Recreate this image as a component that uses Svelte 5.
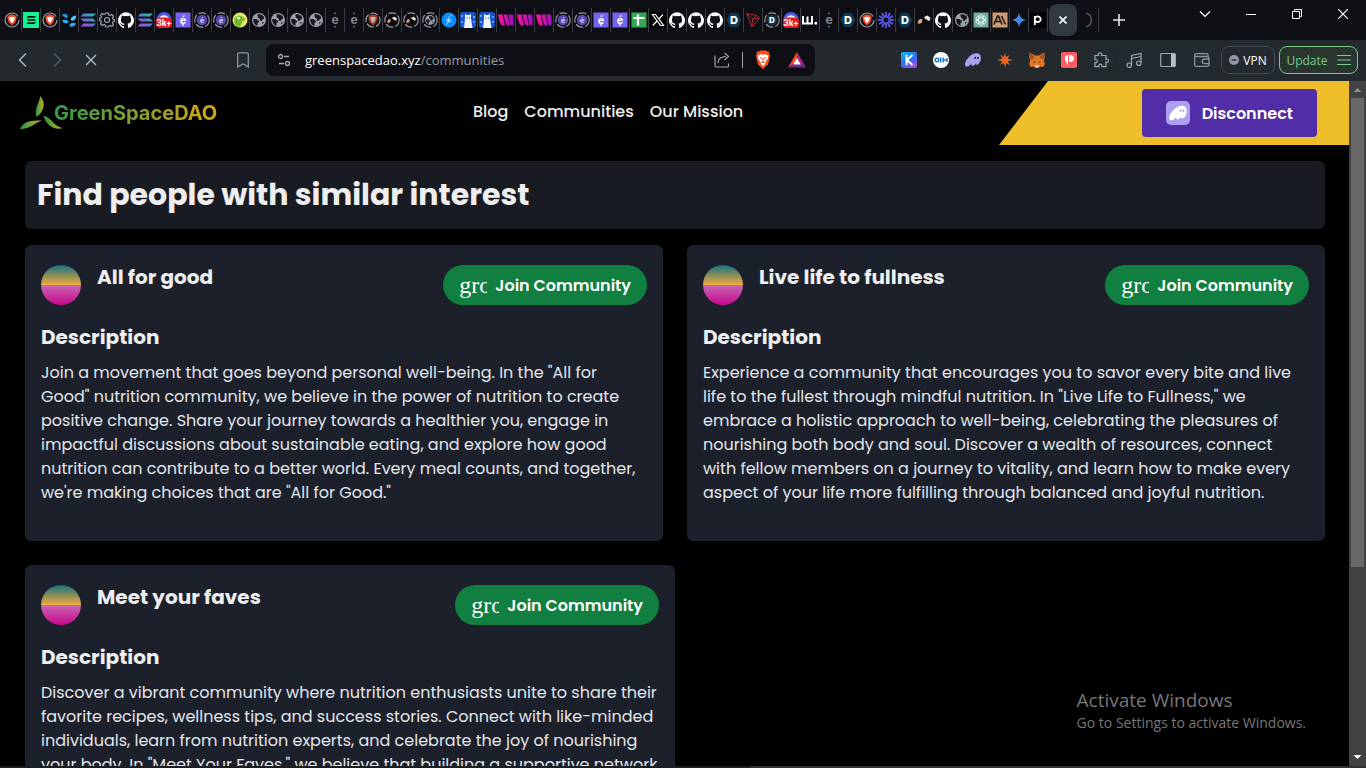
<script>
  const tabs = [
    'brave', 'green', 'brave', 'drops', 'solana', 'gear', 'github', 'solana', 'badge', 'purple',
    'ring', 'ring', 'gecko', 'globe', 'globe', 'globe', 'globe', 'dim', 'dim', 'braveDim',
    'shakeRing', 'shakeRing', 'globeRing', 'filecoin', 'llama', 'llama', 'wave', 'wave', 'wave',
    'ring', 'ring', 'purple', 'purple', 'sheets', 'x', 'github', 'github', 'github', 'd', 'tron',
    'dRing', 'badge', 'w', 'dim', 'd', 'brave', 'burst', 'd', 'shake', 'github', 'globe',
    'openai', 'ai', 'gemini', 'p'
  ];

  const links = ['Blog', 'Communities', 'Our Mission'];

  const communities = [
    {
      name: 'All for good',
      text: `Join a movement that goes beyond personal well-being. In the "All for
Good" nutrition community, we believe in the power of nutrition to create
positive change. Share your journey towards a healthier you, engage in
impactful discussions about sustainable eating, and explore how good
nutrition can contribute to a better world. Every meal counts, and together,
we're making choices that are "All for Good."`
    },
    {
      name: 'Live life to fullness',
      text: `Experience a community that encourages you to savor every bite and live
life to the fullest through mindful nutrition. In "Live Life to Fullness," we
embrace a holistic approach to well-being, celebrating the pleasures of
nourishing both body and soul. Discover a wealth of resources, connect
with fellow members on a journey to vitality, and learn how to make every
aspect of your life more fulfilling through balanced and joyful nutrition.`
    },
    {
      name: 'Meet your faves',
      wide: true,
      text: `Discover a vibrant community where nutrition enthusiasts unite to share their
favorite recipes, wellness tips, and success stories. Connect with like-minded
individuals, learn from nutrition experts, and celebrate the joy of nourishing
your body. In "Meet Your Faves," we believe that building a supportive network`
    }
  ];

  const rays = [0, 30, 60, 90, 120, 150];
</script>

{#snippet lion()}
  <path d="M5 3.500 6.200 2.500h3.600L11 3.500l1.500.2-.3 1.300.5 1-1.400 4.600L8 13.500l-3.300-2.900L3.300 6l.5-1-.3-1.300z" fill="#f0502a" />
  <path d="M5 5.500 8 4.800l3 .7L9.900 8.700 8 11.300 6.100 8.700z" fill="#fff" />
{/snippet}

{#snippet hands()}
  <path d="M1.500 10.500 3.500 7l3 .3-.7 3.400-3 1.300z" fill="#e9a27c" />
  <path d="m8 5 3.500-1.500L14.500 6l-1 3-3.500-1z" fill="#f3e6dc" />
  <path d="M7 7.500 10 7l3 3-2.500 2.500H7z" fill="#050505" />
{/snippet}

{#snippet world()}
  <circle cx="8" cy="8" r="7" fill="#9aa0a6" />
  <path d="M2.300 7h3.200l2.500 2.200v1.300H6.500v3.200C4 13.200 1.800 10.500 2.300 7zM6.500 2.500C9 1.800 11.500 2.800 13 5v1.500l-1.500 1-1 1.500-2-.5.500-1.500-2-1.500-.5-1.500zM11 10.500l2-.5-1.500 2.500z" fill="#17181d" />
{/snippet}

{#snippet favicon(kind)}
  <svg width="16" height="16" viewBox="0 0 16 16" aria-hidden="true">
    {#if kind === 'brave' || kind === 'braveDim'}
      <circle cx="8" cy="8" r="7" fill="none" stroke="#9a9ca3" stroke-width="1.200" stroke-dasharray={kind === 'brave' ? '40 4' : '8 2'} />
      <g opacity={kind === 'brave' ? 1 : 0.7}>{@render lion()}</g>
    {:else if kind === 'green'}
      <path d="M0 0h16v16H0z" fill="#14f195" />
      <path d="M5 4h8l-1.500 1.800H3.500zM4 7h7.500l1.500 1.800H5zM5 10.200h8L11.500 12h-8z" fill="#06170f" />
    {:else if kind === 'drops'}
      <path d="M1 2.500C3.500.8 7 2 7 4.500 6.500 7 3 6 1 2.500z" fill="#1f8fe0" />
      <path d="M15 3.500C15.500 7 13 9.500 10.500 8.500 8.500 6.500 11 4 15 3.500z" fill="#54c5f7" />
      <path d="M1 8.500c3-1.500 5.500-.8 6.500 1.300C6.500 12.500 3 12 1 8.500zM15 11.500c-1.500 3.500-5 4.200-6.500 2 0-2.500 3.500-3.500 6.500-2z" fill="#2aa9f0" />
    {:else if kind === 'solana'}
      <path d="M3.500 1.500H16l-3 3H.5zM.5 6.500H13l3 3H3.500zM3.500 11.500H16l-3 3H.5z" fill="url(#sol)" />
    {:else if kind === 'gear'}
      <path d="M6.700 1h2.600l.4 1.900 1.400.6 1.700-1 1.700 1.700-1 1.700.6 1.400 1.400.3v1.700l-1.400.4-.6 1.400 1 1.700-1.700 1.700-1.700-1-1.400.6L9.300 15H6.700l-.4-1.900-1.400-.6-1.700 1-1.700-1.700 1-1.700-.6-1.400L.5 8.300V6.700l1.400-.4.6-1.400-1-1.700 1.700-1.700 1.700 1 1.400-.6z" fill="none" stroke="#9aa6b0" stroke-width="1.200" />
      <circle cx="8" cy="8" r="2.500" fill="none" stroke="#9aa6b0" stroke-width="1.200" />
    {:else if kind === 'github'}
      <path d="M8 .3a8 8 0 0 0-2.500 15.600c.4.100.500-.2.500-.4v-1.500c-2.200.5-2.700-1-2.700-1-.4-.9-.9-1.200-.9-1.200-.7-.5.1-.5.1-.5.800.1 1.200.8 1.200.8.700 1.300 1.900.9 2.300.7.100-.5.300-.9.500-1.100-1.800-.2-3.600-.9-3.600-3.900 0-.9.300-1.600.8-2.200-.1-.2-.4-1 .1-2.100 0 0 .7-.2 2.200.8a7.500 7.500 0 0 1 4 0c1.500-1 2.200-.8 2.200-.8.4 1.100.2 1.900.1 2.100.500.6.8 1.300.8 2.200 0 3.100-1.900 3.700-3.700 3.900.3.300.600.8.600 1.500v2.300c0 .2.100.5.5.4A8 8 0 0 0 8 .3z" fill="#fff" />
    {:else if kind === 'badge'}
      <circle cx="8" cy="7.500" r="7.500" fill="#4659e8" />
      <path d="M3 5.500q5-5 10 0z" fill="#e9e9ff" />
      <rect y="6" width="16" height="10" rx="3" fill="#e01b24" />
      <text x="8" y="14" font-size="8.500" font-weight="700" fill="#fff" text-anchor="middle">3k+</text>
    {:else if kind === 'purple'}
      <path d="M.5.5h15v15H.5z" fill="#7464f2" />
      <text x="8" y="12" font-size="11" font-weight="700" fill="#fff" text-anchor="middle">é</text>
      <path d="M7.300 12h1.400v2H7.300z" fill="#fff" />
    {:else if kind === 'ring'}
      <circle cx="8" cy="8" r="7.200" fill="none" stroke="#9496a0" stroke-width="1.200" stroke-dasharray="8 2" />
      <circle cx="8" cy="8" r="5.200" fill="#5549ad" />
      <text x="8" y="10.500" font-size="7" font-weight="700" fill="#dcd9ff" text-anchor="middle">é</text>
    {:else if kind === 'gecko'}
      <circle cx="8" cy="8" r="7.500" fill="#e6e364" />
      <path d="M3 6c2-3 6-3 9 0 2 2 1 3-2 3 0 3-1 5-3 6-4-1-6-5-4-9z" fill="#73b72b" />
      <circle cx="6.500" cy="6" r="1.300" fill="#fff" />
    {:else if kind === 'globe'}
      {@render world()}
    {:else if kind === 'globeRing'}
      <circle cx="8" cy="8" r="7.200" fill="none" stroke="#9496a0" stroke-width="1.200" stroke-dasharray="8 2" />
      <g transform="translate(2.400 2.400) scale(.7)">{@render world()}</g>
    {:else if kind === 'dim'}
      <text x="8" y="11.500" font-size="12" font-weight="700" fill="#85878e" text-anchor="middle">e</text>
      <path d="M7 .5h2v1.500H7zM7 14h2v1.500H7z" fill="#60626a" />
    {:else if kind === 'shakeRing'}
      <circle cx="8" cy="8" r="7.200" fill="none" stroke="#9496a0" stroke-width="1.200" stroke-dasharray="8 2" />
      <g transform="translate(2 2) scale(.75)">{@render hands()}</g>
    {:else if kind === 'shake'}
      {@render hands()}
    {:else if kind === 'filecoin'}
      <circle cx="8" cy="8" r="7.500" fill="#0a8dfc" />
      <path d="M11 4c-2-1-2.800 0-3.200 3S7 12.500 5 12M5.500 7l5 .8M5.200 8.800l5 .8" fill="none" stroke="#d8eeff" stroke-width=".8" />
    {:else if kind === 'llama'}
      <rect width="16" height="16" rx="3" fill="#1754c9" />
      <path d="M1 3h2v2H1zM13 4h2v2h-2zM1 9h2v2H1zM13 9h2v2h-2zM3 13h1v1H3z" fill="#58a3f0" />
      <path d="M5 1.500 6.500 3h3L11 1.500v5l1.500 9.500H4l1-9z" fill="#eef5ff" />
      <path d="M6.500 5.500h1v1h-1zM9 5.500h1v1H9z" fill="#123a86" />
    {:else if kind === 'wave'}
      <path d="M0 2.500h4.500L7 13.500H4.500C2 13 1 7 0 2.500zM5.500 2.500h4L12 13.500H9.500C7.500 13 6.500 7 5.500 2.500zM10.500 2.500H15q1 4 .5 11h-2C12 13 11.500 7 10.500 2.500z" fill="url(#pink)" />
    {:else if kind === 'sheets'}
      <path d="M.5.5h15v15H.5z" fill="#34a853" />
      <path d="M2.500 6h11M7 2.500v11" stroke="#fff" stroke-width="2.200" />
    {:else if kind === 'x'}
      <path d="M0 0h16v16H0z" fill="#000" />
      <path d="M2.500 2.500h3l8 11h-3zM13 2.500l-4.500 5M7 9l-4.300 4.500" fill="none" stroke="#fff" stroke-width="1.200" />
    {:else if kind === 'd'}
      <path d="M4.500.8h7L15.500 8l-4 7.200h-7L.5 8z" fill="#0d3a52" />
      <text x="8" y="12" font-size="11" font-weight="800" fill="#fff" text-anchor="middle">D</text>
    {:else if kind === 'dRing'}
      <circle cx="8" cy="8" r="7.200" fill="none" stroke="#9496a0" stroke-width="1.200" stroke-dasharray="8 2" />
      <circle cx="8" cy="8" r="5.200" fill="#0d3a52" />
      <text x="8" y="11" font-size="8" font-weight="800" fill="#fff" text-anchor="middle">D</text>
    {:else if kind === 'tron'}
      <path d="M1.500 1.500 12 3.500l2.500 2.500L7 15zM12 3.500 7.500 7 1.500 1.500M7.500 7 7 15M7.500 7l7-1" fill="none" stroke="#b02a2e" />
    {:else if kind === 'w'}
      <path d="M1 4v7.500h9V4M5.500 4.500v7" fill="none" stroke="#fff" stroke-width="2" />
      <path d="M12.500 10h2.500v2.500h-2.500z" fill="#fff" />
    {:else if kind === 'burst'}
      {#each rays as angle}
        <path d="M8 0v16" stroke="#5b5bf5" stroke-width="1.800" transform={`rotate(${angle} 8 8)`} />
      {/each}
      <circle cx="8" cy="8" r="2.500" fill="#111119" />
    {:else if kind === 'openai'}
      <path d="M.5.5h15v15H.5z" fill="#74aa9c" />
      {#each [0, 60, 120] as angle}
        <rect x="5.800" y="2.600" width="4.400" height="10.800" rx="2.200" fill="none" stroke="#e8fff9" stroke-width=".8" transform={`rotate(${angle} 8 8)`} />
      {/each}
    {:else if kind === 'ai'}
      <path d="M.5.5h15v15H.5z" fill="#d19b75" />
      <path d="M2 12.500 5.500 4h1L10 12.500M3.500 9.500h5M9.500 4l4 8.500" fill="none" stroke="#181818" stroke-width="1.600" />
    {:else if kind === 'gemini'}
      <path d="M8 1q1 6 7 7-6 1-7 7-1-6-7-7 6-1 7-7z" fill="url(#gem)" />
    {:else if kind === 'p'}
      <path d="M0 0h16v16H0z" fill="#000" />
      <path d="M4.800 13V4M4.800 6.500a3 2.800 0 1 1 0 1.500" fill="none" stroke="#fff" stroke-width="1.800" />
    {/if}
  </svg>
{/snippet}

{#snippet ghost(color)}
  <path fill={color} d="M55.600 82.100C50.900 89.500 42.900 98.700 32.300 98.700 27.200 98.700 22.400 96.600 22.400 87.600 22.400 64.800 53.600 29.300 82.600 29.300 99.100 29.300 105.700 40.800 105.700 53.800 105.700 70.400 94.900 89.500 84.100 89.500 80.700 89.500 79 87.600 79 84.700 79 83.900 79.200 83 79.400 82.100 75.700 88.400 68.700 94.200 62 94.200 57.200 94.200 54.700 91.200 54.700 86.900 54.700 85.400 55.100 83.800 55.600 82.100zM80.600 53.300C80.600 49.500 78.400 47.600 75.900 47.600 73.300 47.600 71.100 49.500 71.100 53.300 71.100 57.100 73.300 59 75.900 59 78.400 59 80.600 57.100 80.600 53.300zM94.800 53.300C94.800 49.500 92.600 47.600 90.100 47.600 87.500 47.600 85.300 49.500 85.300 53.300 85.300 57.100 87.500 59 90.100 59 92.600 59 94.800 57.100 94.800 53.300z" fill-rule="evenodd" />
{/snippet}

<div class="browser">
  <div class="tabstrip">
    {#each tabs as kind}
      <div class="tab">{@render favicon(kind)}</div>
    {/each}
    <button class="active-tab" aria-label="Close tab">
      <svg width="8" height="8" viewBox="0 0 8 8"><path d="m.5.5 7 7m0-7-7 7" stroke="#fff" stroke-width="1.600" /></svg>
    </button>
    <div class="loading-tab">
      <svg width="16" height="16" viewBox="0 0 16 16"><path d="M6 1.200A7 7 0 0 1 6 14.800" fill="none" stroke="#50555c" stroke-width="1.600" /></svg>
    </div>
    <button class="new-tab" aria-label="New tab">
      <svg width="12" height="12" viewBox="0 0 12 12"><path d="M6 0v12M0 6h12" stroke="#e8e8e8" stroke-width="1.600" /></svg>
    </button>
    <div class="window-controls">
      <button aria-label="Search tabs"><svg width="12" height="12" viewBox="0 0 12 12"><path d="m1 3.500 5 5 5-5" fill="none" stroke="#fff" stroke-width="1.200" /></svg></button>
      <button aria-label="Minimize"><svg width="10" height="10" viewBox="0 0 10 10"><path d="M0 5.500h10" stroke="#fff" /></svg></button>
      <button aria-label="Restore"><svg width="10" height="10" viewBox="0 0 10 10"><path d="M.5 2.500h7v7h-7zM2.500 2.500v-2h7v7h-2" fill="none" stroke="#fff" /></svg></button>
      <button aria-label="Close"><svg width="10" height="10" viewBox="0 0 10 10"><path d="m0 0 10 10M10 0 0 10" stroke="#fff" stroke-width="1.200" /></svg></button>
    </div>
  </div>

  <div class="toolbar">
    <div class="history">
      <button aria-label="Back"><svg width="16" height="16" viewBox="0 0 16 16"><path d="M11 1.500 4.500 8l6.500 6.500" fill="none" stroke="#b5c0c7" stroke-width="1.300" /></svg></button>
      <button aria-label="Forward"><svg width="16" height="16" viewBox="0 0 16 16"><path d="M5 1.500 11.500 8 5 14.500" fill="none" stroke="#5c656b" stroke-width="1.300" /></svg></button>
      <button aria-label="Stop"><svg width="16" height="16" viewBox="0 0 16 16"><path d="m3 3 10 10M13 3 3 13" stroke="#b5c0c7" stroke-width="1.300" /></svg></button>
      <button class="bookmark" aria-label="Bookmark"><svg width="16" height="16" viewBox="0 0 16 16"><path d="M2.700 2q0-1.200 1.200-1.200h8.200q1.200 0 1.200 1.200v13L8 11.800 2.700 15z" fill="none" stroke="#8c989f" stroke-width="1.300" /></svg></button>
    </div>

    <div class="address">
      <svg width="14" height="14" viewBox="0 0 14 14" fill="none" stroke="#a4a7ad" stroke-width="1.300"><circle cx="3.500" cy="3.500" r="2" /><circle cx="10.500" cy="10.500" r="2" /><path d="M7 3.500h5M2 10.500h5" /></svg>
      <span class="url">greenspacedao.xyz<span>/communities</span></span>
      <button aria-label="Share"><svg width="16" height="16" viewBox="0 0 16 16" fill="none" stroke="#a2a5ab" stroke-width="1.200"><path d="M1 3.500v10q0 1.500 1.500 1.500h11q1 0 1-1v-2.500M4 11c0-4 3-6.500 8-6.500M10.500 1l4 3.500-4 3.500" /></svg></button>
      <span class="divider"></span>
      <button class="shield" aria-label="Shields"><svg width="18" height="20" viewBox="0 0 18 20"><path d="m4.500 1.500 2-.9h5l2 .9 2 .2-.3 2 1 1.800-2.200 9L9 19l-5-4.500-2.200-9 1-1.800-.3-2z" fill="#f5521e" /><path d="M4 5.500 7 4.300l2 .5 2-.5 3 1.200-.3 3.500-2 2.500-.7 2.500L9 16l-2-2-.7-2.500-2-2.500z" fill="#fff" /><path d="M5.800 7.500 8 8.500M12.200 7.500 10 8.500M9 8v3M7.500 12.500 9 11.500l1.500 1" stroke="#f5521e" /></svg></button>
      <button aria-label="Rewards"><svg width="18" height="16" viewBox="0 0 18 16"><path d="M9 0 0 15.500 9 10z" fill="#f04a24" /><path d="m9 0 9 15.500L9 10z" fill="#a52687" /><path d="M0 15.500h18L9 10z" fill="#65328f" /><path d="m9 6 3.800 6.500H5.200z" fill="#fff" /></svg></button>
    </div>

    <div class="extensions">
      <svg width="16" height="16" viewBox="0 0 16 16"><rect width="16" height="16" rx="2" fill="url(#keplr)" /><path d="M5.500 3v10M11.500 3 6 8l5.500 5" fill="none" stroke="#fff" stroke-width="2" /></svg>
      <svg width="16" height="16" viewBox="0 0 16 16"><circle cx="8" cy="8" r="8" fill="#fff" /><circle cx="4" cy="8" r="1.800" fill="none" stroke="#1877d2" stroke-width="1.400" /><path d="M7.700 5.500v5M10.200 5.500v5M10.500 8h3M14 6v4" stroke="#1877d2" stroke-width="1.400" /></svg>
      <svg width="16" height="16" viewBox="0 0 16 16"><g transform="translate(-4.200 -4.200) scale(.190)">{@render ghost('#ab9ff2')}</g></svg>
      <svg width="16" height="16" viewBox="0 0 16 16">
        <path d="m8 0 .8 5.200L12.500 3l-2 3.800L16 8l-5.500 1L13 13.500l-3.800-2.700L8 16l-1-5.200L3 13l2.500-3.800L0 8l5.500-1.200L3 2.500l4 2.700z" fill="#e8742a" /><circle cx="8" cy="8" r="2.500" fill="#ff5a1f" />
      </svg>
      <svg width="16" height="16" viewBox="0 0 16 16"><path d="m.8.500 5.200 3h4l5.200-3 .6 5-1 3 1 3.500-1.500 3-3.300-.5L9.500 16h-3L5 14.500 1.700 15 .2 12l1-3.500-1-3z" fill="#e27625" /><path d="m.8.500 4.500 4L3.500 8 .5 6zM15.200.500l-4.500 4L12.500 8l3-2z" fill="#a65125" /><path d="m4 9 2.500 1-.5 1zM12 9l-2.500 1 .5 1z" fill="#233447" /><path d="M5.500 13h5l-1 2.500h-3z" fill="#d7c1b3" /></svg>
      <svg width="16" height="16" viewBox="0 0 16 16"><rect width="16" height="16" rx="2" fill="#ff5b62" /><path d="M4 4.500Q5 3 7 3v10.500q-1-.5-1.300-2.500L4 8zM8 3c3-.5 5 1 5 3.500S11 10.500 8 10z" fill="#fff" /></svg>
      <svg width="16" height="16" viewBox="0 0 16 16"><path d="M2 3.500h3.500C4.700 1.600 6 .800 7 .800s2.400.8 1.500 2.700H13v4c1.700-.8 2.500.5 2.500 1.300S14.700 11 13 10.200v4.500H9c.5-1.800-.500-2.500-1.500-2.500S5.500 13 6 14.700H2v-4c1.700.5 2.300-.5 2.300-1.500S3.500 7.200 2 7.700z" fill="none" stroke="#9aa8b0" stroke-width="1.200" /></svg>
    </div>
    <div class="tools">
      <button aria-label="Playlist"><svg width="16" height="16" viewBox="0 0 16 16" fill="none" stroke="#9aa8b0" stroke-width="1.200"><path d="M5.500 13V3.500l9.500-2V11M5.500 6.500l9.500-2" /><circle cx="3.200" cy="13.200" r="2.200" /><circle cx="12.800" cy="11.200" r="2.200" /></svg></button>
      <button aria-label="Sidebar"><svg width="16" height="16" viewBox="0 0 16 16"><rect x=".7" y="1.500" width="14.600" height="13" rx="1" fill="none" stroke="#9aa8b0" stroke-width="1.200" /><path d="M11 1.500h4.300v13H11z" fill="#b1c0c8" /></svg></button>
      <button aria-label="Wallet"><svg width="16" height="16" viewBox="0 0 16 16" fill="none" stroke="#87949b" stroke-width="1.300"><path d="M14 4.500V2.700q0-1-1-1H2.500Q.7 1.700.7 3.200v9.600q0 1.500 1.500 1.500H13q2 0 2-2V6.500q0-2-2-2H2.500Q.7 4.500.7 3M15 7h-4.500a2.300 2.300 0 0 0 0 4.700H15" /></svg></button>
    </div>
    <button class="vpn"><svg width="10" height="10" viewBox="0 0 10 10"><circle cx="5" cy="5" r="5" fill="#9498ae" /><path d="M2.500 5h5" stroke="#23292d" stroke-width="1.400" /></svg>VPN</button>
    <button class="update">Update<svg width="14" height="12" viewBox="0 0 14 12"><path d="M0 1.500h14M0 6h14M0 10.500h14" stroke="#78c98b" stroke-width="1.200" /></svg></button>
  </div>

  <div class="viewport">
    <div class="page">
      <header>
        <a class="logo" href="#home">
          <svg width="44" height="36" viewBox="0 0 44 36">
            <defs>
              <linearGradient id="leaf"><stop stop-color="#269448" /><stop offset="1" stop-color="#c9ae20" /></linearGradient>
              <linearGradient id="sol" x1="1" y1="0" x2="0" y2="1"><stop stop-color="#19c9a0" /><stop offset=".5" stop-color="#5e77cf" /><stop offset="1" stop-color="#b344e6" /></linearGradient>
              <linearGradient id="pink"><stop stop-color="#ff1691" /><stop offset="1" stop-color="#9c0fc4" /></linearGradient>
              <linearGradient id="gem"><stop stop-color="#9a72c9" /><stop offset=".5" stop-color="#4285e8" /><stop offset="1" stop-color="#35a8dc" /></linearGradient>
              <linearGradient id="keplr" x1="0" y1="0" x2=".6" y2="1"><stop stop-color="#12bdf3" /><stop offset=".6" stop-color="#2b6ef0" /><stop offset="1" stop-color="#a14fe0" /></linearGradient>
            </defs>
            <path d="M20 1C20 8 14 12 16.500 22 23 18 27 8 20 1z" fill="url(#leaf)" />
            <path d="M0 34.500C3 25 14 25.500 22.500 25.500 16 27 12 33 0 34.500z" fill="url(#leaf)" />
            <path d="M23.500 20.500C31 22 34 32 43 33 34 36 25 29 23.500 20.500z" fill="url(#leaf)" />
          </svg>
          <span>GreenSpaceDAO</span>
        </a>
        <nav>
          {#each links as link}
            <a href={`#${link}`}>{link}</a>
          {/each}
        </nav>
        <div class="wallet">
          <button class="disconnect">
            <svg width="24" height="24" viewBox="0 0 24 24"><rect width="24" height="24" rx="5" fill="#ab9ff2" /><g transform="translate(-1.400 -1.400) scale(.210)">{@render ghost('#fff')}</g></svg>
            Disconnect
          </button>
        </div>
      </header>

      <main>
        <div class="heading"><h1>Find people with similar interest</h1></div>
        <div class="cards">
          {#each communities as item}
            <article class:wide={item.wide}>
              <div class="card-head">
                <span class="avatar"></span>
                <h2>{item.name}</h2>
                <button class="join"><span class="alt">gro</span>Join Community</button>
              </div>
              <h3>Description</h3>
              <p>{item.text}</p>
            </article>
          {/each}
        </div>
      </main>
    </div>

    <div class="scrollbar">
      <svg width="17" height="17" viewBox="0 0 17 17"><path d="M4.500 11h8l-4-4z" fill="#8b8b8b" /></svg>
      <div class="track"><div class="thumb"></div></div>
      <svg width="17" height="17" viewBox="0 0 17 17"><path d="M4.500 6h8l-4 4z" fill="#fff" /></svg>
    </div>

    <div class="watermark">
      <div class="big">Activate Windows</div>
      <div>Go to Settings to activate Windows.</div>
    </div>
  </div>
  <div class="edge"></div>
</div>

<style>
  :global(body) { background: #000; overflow: hidden; }
  * { box-sizing: border-box; }
  button { border: 0; padding: 0; background: none; color: inherit; font: inherit; }
  a { color: inherit; text-decoration: none; }
  svg { display: block; flex: none; }
  h1, h2, h3, p { margin: 0; }

  .browser { display: flex; flex-direction: column; height: 100vh; font-family: "Open Sans", "Noto Sans", sans-serif; }

  .tabstrip { flex: none; display: flex; align-items: center; height: 40px; padding-left: 3px; background: #0e0f14; color: #fff; font-family: "Inter", sans-serif; }
  .tab, .loading-tab { flex: none; display: flex; align-items: center; justify-content: center; width: 19px; height: 24px; border-right: 1px solid #3a3c42; }
  .active-tab { flex: none; display: flex; align-items: center; justify-content: center; width: 28px; height: 32px; margin-left: 1px; border-radius: 8px; background: #30393f; }
  .loading-tab { width: 22px; }
  .new-tab { flex: none; display: flex; align-items: center; justify-content: center; width: 28px; height: 28px; margin-left: 6px; }
  .window-controls { display: flex; align-self: flex-start; margin-left: auto; }
  .window-controls button { display: flex; align-items: center; justify-content: center; width: 46px; height: 28px; }

  .toolbar { flex: none; display: flex; align-items: center; height: 41px; padding: 0 8px 1px 0; background: #23292d; }
  .history { flex: none; display: flex; width: 260px; padding-left: 6px; }
  .history button { display: flex; justify-content: center; width: 34px; }
  .history .bookmark { margin-left: auto; }
  .address { flex: 1; display: flex; align-items: center; height: 32px; margin: 0 79px 0 6px; padding: 0 9px 0 11px; border-radius: 8px; background: #0e0f14; }
  .url { flex: 1; margin-left: 14px; color: #fff; font-size: 13px; line-height: 20px; white-space: nowrap; }
  .url span { color: #9a9ca3; }
  .divider { width: 1px; height: 16px; margin: 0 11px 0 12px; background: #a5a8ad; }
  .shield { margin-right: 16px; }
  .extensions { flex: none; display: flex; gap: 16px; align-items: center; height: 28px; padding: 0 6px; border: 1px solid #20262a; border-radius: 8px; }
  .tools { flex: none; display: flex; gap: 18px; padding: 0 11px 0 10px; }
  .vpn, .update { flex: none; display: flex; align-items: center; justify-content: center; height: 28px; border-radius: 8px; font-size: 12px; }
  .vpn { gap: 4px; width: 54px; margin-right: 4px; border: 1px solid #424a50; color: #fff; }
  .update { gap: 9px; width: 79px; border: 1px solid #78c98b; background: #29352f; color: #78c98b; }

  .viewport { flex: 1; min-height: 0; display: flex; position: relative; background: #000; }
  .page { flex: 1; min-width: 0; overflow: hidden; color: #eee; font-family: "Poppins", "Inter", sans-serif; }

  header { display: flex; justify-content: space-between; align-items: center; height: 64px; padding-left: 20px; }
  .logo { display: flex; align-items: center; }
  .logo span { margin-left: -10px; font: 700 20px/32px "Inter", sans-serif; background: linear-gradient(90deg, #2f9a4a, #d9a514); background-clip: text; color: transparent; }
  nav { display: flex; gap: 16px; padding-bottom: 2px; font-size: 16px; font-weight: 500; line-height: 24px; }
  .wallet { display: flex; justify-content: flex-end; width: 350px; padding: 8px 32px 8px 0; background: #eebf2b; clip-path: polygon(14% 0, 100% 0, 100% 100%, 0 100%); }
  .disconnect { display: flex; align-items: center; gap: 12px; height: 48px; padding: 0 24px; border-radius: 4px; background: #512da8; color: #fff; font-size: 16px; font-weight: 600; }

  main { padding: 16px 24px 0 25px; }
  .heading { padding: 14px 12px; border-radius: 6px; background: #181b22; }
  h1 { font-size: 30px; line-height: 40px; font-weight: 700; }
  .cards { display: flex; flex-wrap: wrap; gap: 24px; margin-top: 16px; }
  article { width: calc(50% - 12px); padding: 20px 16px 36px; border-radius: 6px; background: #1b202b; }
  article.wide { width: 50%; }
  .card-head { display: flex; gap: 16px; }
  .avatar { flex: none; width: 40px; height: 40px; border-radius: 50%; background: linear-gradient(#14707e 0, #f2ab3c 50%, #c868b4 50%, #c7068c 100%); }
  h2, h3 { font-size: 20px; line-height: 24px; font-weight: 700; }
  h3 { margin-top: 20px; }
  .join { display: flex; align-items: center; gap: 8px; height: 40px; margin-left: auto; padding: 0 16px; border-radius: 20px; background: #107f3f; color: #fff; font-size: 16px; font-weight: 600; white-space: nowrap; }
  .alt { width: 28px; overflow: hidden; font: 400 24px/28px "Liberation Serif", serif; text-align: left; }
  p { margin-top: 12px; color: #e4e6eb; font-size: 16px; line-height: 24px; white-space: pre; }

  .scrollbar { flex: none; display: flex; flex-direction: column; width: 17px; background: #424242; }
  .track { flex: 1; padding: 0 2px; }
  .thumb { height: 72%; background: #686868; }

  .watermark { position: absolute; right: 60px; bottom: 32px; color: #777; font-size: 14px; line-height: 22px; }
  .watermark .big { font-size: 19px; line-height: 24px; }
  .edge { flex: none; height: 2px; background: linear-gradient(90deg, #1c1f20 55%, #303335 55%); }
</style>
